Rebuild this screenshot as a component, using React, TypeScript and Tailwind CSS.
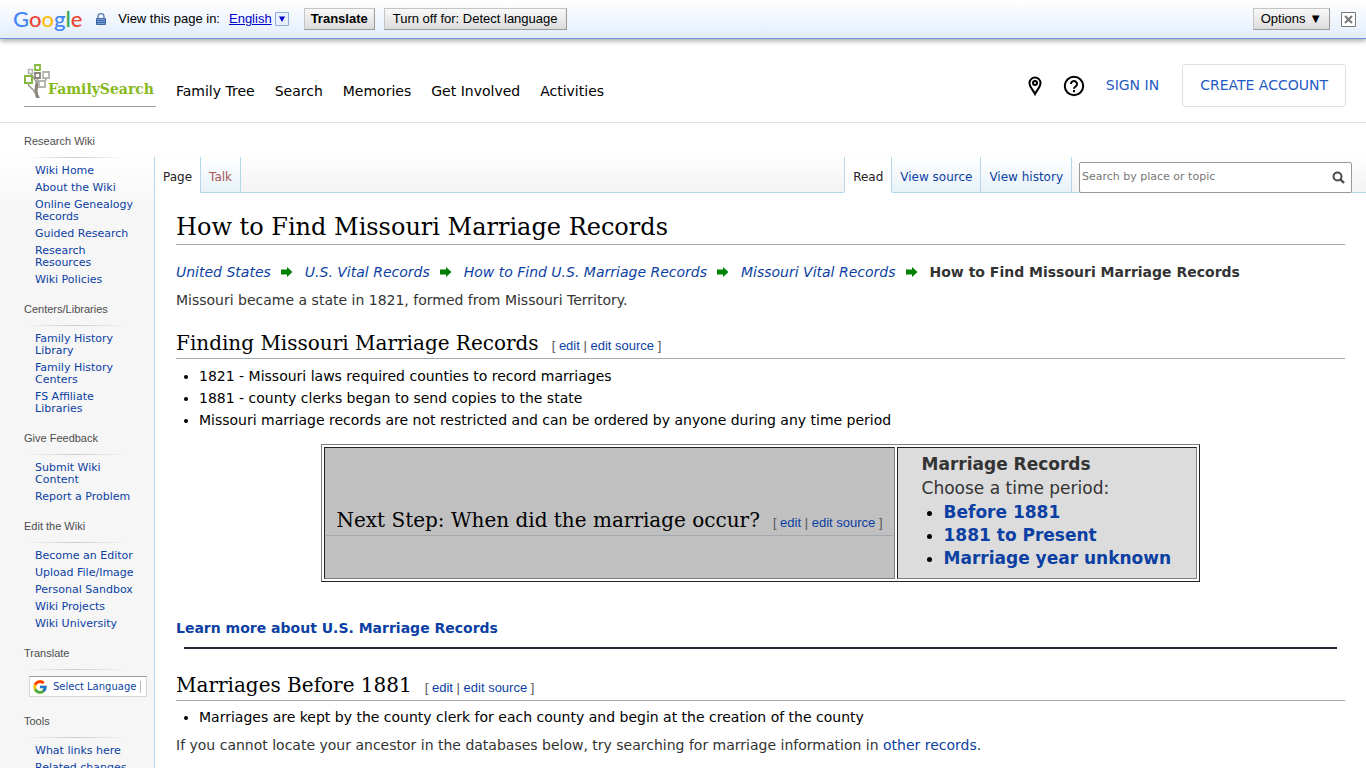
import type { ReactNode } from "react";
import { FcGoogle } from "react-icons/fc";

interface SidebarSection {
  title: string;
  links: string[];
}

const topNav = ["Family Tree", "Search", "Memories", "Get Involved", "Activities"];

const sections: SidebarSection[] = [
  {
    title: "Research Wiki",
    links: [
      "Wiki Home",
      "About the Wiki",
      "Online Genealogy Records",
      "Guided Research",
      "Research Resources",
      "Wiki Policies",
    ],
  },
  {
    title: "Centers/Libraries",
    links: ["Family History Library", "Family History Centers", "FS Affiliate Libraries"],
  },
  {
    title: "Give Feedback",
    links: ["Submit Wiki Content", "Report a Problem"],
  },
  {
    title: "Edit the Wiki",
    links: [
      "Become an Editor",
      "Upload File/Image",
      "Personal Sandbox",
      "Wiki Projects",
      "Wiki University",
    ],
  },
];

const breadcrumbs = [
  "United States",
  "U.S. Vital Records",
  "How to Find U.S. Marriage Records",
  "Missouri Vital Records",
];

const periods = ["Before 1881", "1881 to Present", "Marriage year unknown"];

function TranslateBar() {
  const button =
    "h-[22px] border border-[#c4c4c4] border-r-[#999] border-b-[#999] bg-linear-to-b from-[#f8f8f8] to-[#dcdcdc] leading-5 whitespace-nowrap";
  return (
    <div className="relative z-10 flex h-[39px] items-center border-b border-[#6b90da] bg-linear-to-b from-white to-[#e2edfb] pr-[10px] pl-[13px] font-['Liberation_Sans',Arial,sans-serif] text-[13px] text-black shadow-[0_2px_5px_rgba(0,0,0,0.35)]">
      <a
        href="#google"
        className="mr-[14px] font-['Lato',sans-serif] text-[22px] leading-7 font-medium"
        aria-label="Google"
      >
        <span className="text-[#4285f4]">G</span>
        <span className="text-[#ea4335]">o</span>
        <span className="text-[#fbbc05]">o</span>
        <span className="text-[#4285f4]">g</span>
        <span className="text-[#34a853]">l</span>
        <span className="text-[#ea4335]">e</span>
      </a>
      <svg width="10" height="12" viewBox="0 0 10 12" className="mr-3 shrink-0">
        <path d="M2 6V3.5a3 3 0 0 1 6 0V6" fill="none" stroke="#5f83b8" strokeWidth="1.4" />
        <path d="M.5 5.5h9v6h-9z" fill="#7ba0d4" stroke="#3f66a4" />
        <path d="M1 7.5h8M1 9.5h8" stroke="#3f66a4" />
      </svg>
      <span className="mr-[9px] whitespace-nowrap">View this page in:</span>
      <button type="button" className="flex items-center gap-[3px] text-[#0000cc]">
        <span className="underline">English</span>
        <svg width="14" height="14" viewBox="0 0 14 14">
          <path d="M.5.5h13v13H.5z" fill="#e8f0fb" stroke="#8cacdc" />
          <path d="M4 4.500h6L7 10z" fill="#0000cc" />
        </svg>
      </button>
      <button type="button" className={`ml-[15px] px-[6px] font-bold ${button}`}>
        Translate
      </button>
      <button type="button" className={`ml-[9px] px-2 ${button}`}>
        Turn off for: Detect language
      </button>
      <button type="button" className={`ml-auto px-[7px] ${button}`}>
        Options ▼
      </button>
      <button type="button" aria-label="Close" className="ml-[11px]">
        <svg width="15" height="15" viewBox="0 0 15 15">
          <path d="M.5.5h14v14H.5z" fill="#fff" stroke="#777" />
          <path d="M4 4l7 7M11 4l-7 7" stroke="#777" strokeWidth="2" />
        </svg>
      </button>
    </div>
  );
}

function Logo() {
  return (
    <a
      href="#home"
      className="flex h-[43px] w-[132px] items-start border-b border-[#9a9c9e]"
      aria-label="FamilySearch"
    >
      <svg width="26" height="34" viewBox="0 0 26 34" fill="none" className="shrink-0">
        <path
          d="M4 19c0 5 6 5 7 10M13.500 14v7M22 15c0 4-5 3-7 7M7 8c0 6 5 6 6 12"
          stroke="#a39e96"
          strokeWidth="1.6"
        />
        <path d="M12 18c-2 5-2 10 0 16h4c-3-5-3-8-1-13z" fill="#8b857c" />
        <path d="M11 1h5v5h-5z" fill="#fff" stroke="#87b940" strokeWidth="1.8" />
        <path d="M4.500 5.500h4v4h-4z" fill="#fff" stroke="#b4b4b0" strokeWidth="1.6" />
        <path d="M11 9h5v5h-5z" fill="#fff" stroke="#8b857c" strokeWidth="1.8" />
        <path d="M19 8h6v6h-6z" fill="#fff" stroke="#b4b4b0" strokeWidth="1.8" />
        <path d="M1 12h7v7H1z" fill="#fff" stroke="#87b940" strokeWidth="2" />
        <path d="M15 17h6v6h-6z" fill="#fff" stroke="#b4b4b0" strokeWidth="1.8" />
      </svg>
      <span className="mt-[14px] -ml-[2px] font-['DejaVu_Serif',serif] text-[14px] leading-[22px] font-bold text-[#87b91c]">
        FamilySearch
      </span>
    </a>
  );
}

function SiteHeader() {
  return (
    <header className="flex h-21 items-center border-b border-[#dfdfdf] bg-white pt-[10px] pr-5 pl-6">
      <Logo />
      <nav className="mt-3 ml-5 flex gap-5 text-[14px] text-black">
        {topNav.map((item) => (
          <a key={item} href="#nav" className="whitespace-nowrap">
            {item}
          </a>
        ))}
      </nav>
      <div className="ml-auto flex items-center text-[14px] whitespace-nowrap text-[#1f5bc4]">
        <a href="#map" aria-label="Locations">
          <svg width="14" height="20" viewBox="0 0 14 20" fill="none" stroke="#000" strokeWidth="2">
            <path d="M7 18C5 14 1.500 11 1.500 7a5.500 5.500 0 0 1 11 0C12.500 11 9 14 7 18z" />
            <circle cx="7" cy="7" r="2" />
          </svg>
        </a>
        <a href="#help" aria-label="Help" className="ml-[21px]">
          <svg width="22" height="22" viewBox="0 0 22 22" fill="none" stroke="#000" strokeWidth="2">
            <circle cx="11" cy="11" r="9.200" />
            <path d="M8 9a3 3 0 1 1 4.600 2.500C11.500 12.200 11 12.600 11 13.800" />
            <path d="M11 15v2.200" />
          </svg>
        </a>
        <a href="#signin" className="ml-[21px]">
          SIGN IN
        </a>
        <a
          href="#create"
          className="ml-[23px] flex h-[43px] items-center rounded-[4px] border border-[#dedfe0] px-[17px]"
        >
          CREATE ACCOUNT
        </a>
      </div>
    </header>
  );
}

function SectionTitle({ children }: { children: ReactNode }) {
  return (
    <>
      <h3 className="font-['Liberation_Sans',Arial,sans-serif] text-[11px] leading-3 text-[#4d4d4d]">
        {children}
      </h3>
      <div className="mt-[10px] mr-7 h-px bg-linear-to-r from-transparent via-[#c8ccd1] to-transparent" />
    </>
  );
}

function Sidebar() {
  return (
    <aside className="w-[154px] shrink-0 bg-linear-to-b from-white from-[30px] to-[#f6f6f6] to-[90px] pt-3 pl-6 text-[11px] leading-3">
      {sections.map((section) => (
        <div key={section.title} className="mb-[17px]">
          <SectionTitle>{section.title}</SectionTitle>
          <ul className="mt-[7px] flex flex-col gap-[5px] pr-5 pl-[11px] text-[#0c3fa3]">
            {section.links.map((link) => (
              <li key={link}>
                <a href="#wiki">{link}</a>
              </li>
            ))}
          </ul>
        </div>
      ))}
      <div className="mb-[18px]">
        <SectionTitle>Translate</SectionTitle>
        <button
          type="button"
          className="mt-[6px] ml-[5px] flex h-[21px] w-[118px] items-center border border-[#d5d5d5] border-t-[#9b9b9b] bg-white pl-[2px] text-[10px] whitespace-nowrap text-[#0c3fa3]"
        >
          <FcGoogle size={16} className="mr-[5px] shrink-0" />
          Select Language
          <span className="ml-1 h-3 w-px shrink-0 bg-[#bbb]" />
        </button>
      </div>
      <SectionTitle>Tools</SectionTitle>
      <ul className="mt-[7px] flex flex-col gap-[5px] pl-[11px] text-[#0c3fa3]">
        <li>
          <a href="#links">What links here</a>
        </li>
        <li>
          <a href="#changes">Related changes</a>
        </li>
      </ul>
    </aside>
  );
}

function Tabs() {
  const tab =
    "flex h-9 items-center border-r border-b border-[#b5d7ee] px-2 pt-[5px] whitespace-nowrap";
  const idle = "bg-linear-to-b from-white to-[#e8f2f8]";
  const active = "border-b-white bg-white text-[#222]";
  return (
    <div className="flex h-[70px] items-end bg-linear-to-b from-white from-[30px] to-[#f3f3f3] text-[12px] text-[#0c3fa3]">
      <nav className="flex">
        <a href="#page" className={`border-l ${tab} ${active}`}>
          Page
        </a>
        <a href="#talk" className={`${tab} ${idle} text-[#a55858]`}>
          Talk
        </a>
      </nav>
      <div className="h-9 flex-1 border-b border-[#b5d7ee]" />
      <nav className="flex">
        <a href="#read" className={`border-l ${tab} ${active}`}>
          Read
        </a>
        <a href="#source" className={`${tab} ${idle}`}>
          View source
        </a>
        <a href="#history" className={`${tab} ${idle}`}>
          View history
        </a>
      </nav>
      <form className="flex h-9 items-end border-b border-[#b5d7ee] pr-[14px] pl-[7px]">
        <div className="-mb-px flex h-[31px] w-[273px] items-center rounded-[2px] border border-[#999] bg-white pr-[6px]">
          <input
            type="search"
            aria-label="Search by place or topic"
            placeholder="Search by place or topic"
            className="min-w-0 flex-1 px-[2px] pb-px text-[11px] outline-none placeholder:text-[#777]"
          />
          <button type="button" aria-label="Search">
            <svg width="13" height="13" viewBox="0 0 13 13" fill="none" stroke="#4a4a4a">
              <circle cx="5.500" cy="5.500" r="4" strokeWidth="2" />
              <path d="M8.500 8.500l3.500 3.500" strokeWidth="2.400" />
            </svg>
          </button>
        </div>
      </form>
    </div>
  );
}

function EditLinks() {
  return (
    <span className="ml-[13px] font-['Liberation_Sans',Arial,sans-serif] text-[13px] whitespace-nowrap text-[#555]">
      [ <a href="#edit" className="text-[#0c3fa3]">edit</a> |{" "}
      <a href="#edit-source" className="text-[#0c3fa3]">edit source</a> ]
    </span>
  );
}

function Heading({ children }: { children: ReactNode }) {
  return (
    <h2 className="border-b border-[#a2a9b1] font-['DejaVu_Serif',serif] text-[20px] leading-6 text-black">
      {children}
      <EditLinks />
    </h2>
  );
}

function PeriodTable() {
  const cell = "border border-[#222] border-r-[#808080] border-b-[#808080]";
  return (
    <table className="mx-auto mt-[13px] border-separate border-spacing-[2px] border border-[#808080] border-r-[#222] border-b-[#222]">
      <tbody>
        <tr>
          <td className={`bg-[#c0c0c0] px-px pt-[17px] ${cell}`}>
            <h2 className="border-b border-[#a2a9b1] px-[10px] font-['DejaVu_Serif',serif] text-[20px] leading-6 whitespace-nowrap text-black">
              Next Step: When did the marriage occur?
              <EditLinks />
            </h2>
          </td>
          <td className={`w-[300px] bg-[#dcdcdc] pt-1 pr-3 pb-2 pl-6 text-[17px] text-[#333] ${cell}`}>
            <p className="leading-6 font-bold">Marriage Records</p>
            <p className="leading-6">Choose a time period:</p>
            <ul className="mt-[1px] list-disc pl-[22px] leading-[23px] font-bold whitespace-nowrap marker:text-black">
              {periods.map((period) => (
                <li key={period}>
                  <a href="#period" className="text-[#0c3fa3]">
                    {period}
                  </a>
                </li>
              ))}
            </ul>
          </td>
        </tr>
      </tbody>
    </table>
  );
}

function Article() {
  return (
    <main className="border-l border-[#b5d7ee] bg-white px-[21px] pt-[17px] pb-6 text-[14px] leading-[22px] text-[#333]">
      <h1 className="border-b border-[#a2a9b1] font-['DejaVu_Serif',serif] text-[24px] leading-[34px] text-black">
        How to Find Missouri Marriage Records
      </h1>
      <p className="mt-4 flex items-center whitespace-nowrap">
        {breadcrumbs.map((crumb) => (
          <span key={crumb} className="flex items-center">
            <a href="#crumb" className="text-[#0c3fa3] italic">
              {crumb}
            </a>
            <svg width="12" height="12" viewBox="0 0 12 12" className="mr-3 ml-[10px]">
              <path d="M0 3.500h6V1l5.500 5L6 11V8.500H0z" fill="#008000" />
            </svg>
          </span>
        ))}
        <strong>How to Find Missouri Marriage Records</strong>
      </p>
      <p className="mt-[6px] mb-5">
        Missouri became a state in 1821, formed from Missouri Territory.
      </p>
      <Heading>Finding Missouri Marriage Records</Heading>
      <ul className="mt-[6px] list-disc pl-[23px] text-black">
        <li>1821 - Missouri laws required counties to record marriages</li>
        <li>1881 - county clerks began to send copies to the state</li>
        <li>
          Missouri marriage records are not restricted and can be ordered by anyone during any time
          period
        </li>
      </ul>
      <PeriodTable />
      <p className="mt-[35px] font-bold">
        <a href="#learn" className="text-[#0c3fa3]">
          Learn more about U.S. Marriage Records
        </a>
      </p>
      <hr className="mx-2 mt-2 mb-6 border-t-2 border-[#2a2433]" />
      <Heading>Marriages Before 1881</Heading>
      <ul className="mt-[5px] list-disc pl-[23px] text-black">
        <li>
          Marriages are kept by the county clerk for each county and begin at the creation of the
          county
        </li>
      </ul>
      <p className="mt-[6px]">
        If you cannot locate your ancestor in the databases below, try searching for marriage
        information in{" "}
        <a href="#other" className="text-[#0c3fa3]">
          other records
        </a>
        .
      </p>
    </main>
  );
}

export default function App() {
  return (
    <div className="h-screen overflow-hidden bg-white font-[Verdana,'DejaVu_Sans',sans-serif]">
      <TranslateBar />
      <SiteHeader />
      <div className="flex">
        <Sidebar />
        <div className="min-w-0 flex-1">
          <Tabs />
          <Article />
        </div>
      </div>
    </div>
  );
}
